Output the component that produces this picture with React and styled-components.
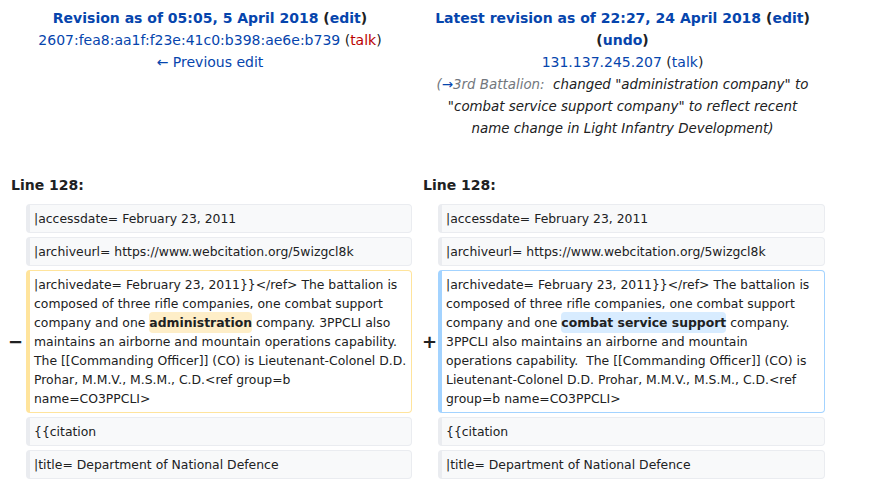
import React from 'react';
import styled, { createGlobalStyle } from 'styled-components';

const Global = createGlobalStyle`
  html, body { margin:0; padding:0; background:#fff; }
  body { font-family:'DejaVu Sans', sans-serif; color:#202122; }
`;

const Page = styled.div` width:874px; padding:7px 0 0 4px; box-sizing:border-box; `;

const Header = styled.div`
  display:grid; grid-template-columns: 408px 409px; column-gap:4px; margin-bottom:34px;
  align-items:start;
`;
const Title = styled.div`
  text-align:center; font-size:14px; line-height:22.2px; padding:0 10px 0 14px;
`;
const Bold = styled.div` font-weight:bold; `;
const A = styled.a` color:${p => p.$red ? '#ba0000' : '#0645ad'}; text-decoration:none; `;
const Paren = styled.span` color:#202122; `;
const Comment = styled.div` font-style:italic; font-size:13.4px; color:#202122; `;
const Auto = styled.span` color:#72777d; `;

const Grid = styled.div`
  display:grid; grid-template-columns: 18px 386px 18px 387px; column-gap:4px; row-gap:4px;
`;
const LineNo = styled.div`
  grid-column: span 2; font-weight:bold; font-size:14px; line-height:22px; padding-left:7px; margin-bottom:4px;
`;
const Marker = styled.div`
  display:flex; align-items:center; justify-content:flex-end;
  font-weight:bold; font-size:18px; line-height:1; color:#202122;
  margin-right:${p => p.$shift || 0}px;
`;
const kinds = {
  ctx: { bg:'#f8f9fa', bd:'#eaecf0' },
  del: { bg:'#fff', bd:'#ffe49c' },
  add: { bg:'#fff', bd:'#a3d3ff' },
};
const Cell = styled.div`
  font-size:12.4px; line-height:19px; white-space:pre-wrap; word-wrap:break-word;
  background:${p => kinds[p.$kind].bg};
  border:1px solid ${p => kinds[p.$kind].bd}; border-left-width:4px; border-radius:4px;
  padding:4px 3px 4px 4px;
`;
const Change = styled.span`
  font-weight:bold; border-radius:4px; padding:3px 0;
  background:${p => p.$kind === 'del' ? '#feeec8' : '#d8ecff'};
`;

const Ctx = ({ text }) => (
  <>
    <Marker />
    <Cell $kind="ctx">{text}</Cell>
  </>
);

export default function App() {
  return (
    <Page>
      <Global />
      <Header>
        <Title>
          <Bold><A>Revision as of 05:05, 5 April 2018</A> <Paren>(<A>edit</A>)</Paren></Bold>
          <div><A>2607:fea8:aa1f:f23e:41c0:b398:ae6e:b739</A> <Paren>(<A $red>talk</A>)</Paren></div>
          <div><A>← Previous edit</A></div>
        </Title>
        <Title>
          <Bold><A>Latest revision as of 22:27, 24 April 2018</A> <Paren>(<A>edit</A>)</Paren></Bold>
          <Bold><Paren>(<A>undo</A>)</Paren></Bold>
          <div><A>131.137.245.207</A> <Paren>(<A>talk</A>)</Paren></div>
          <Comment>
            <Auto>(<A>→</A>3rd Battalion:</Auto>{'\u00a0 '}changed "administration company" to "combat service support company" to reflect recent name change in Light Infantry Development)
          </Comment>
        </Title>
      </Header>
      <Grid>
        <LineNo>Line 128:</LineNo>
        <LineNo>Line 128:</LineNo>

        <Ctx text="|accessdate= February 23, 2011" />
        <Ctx text="|accessdate= February 23, 2011" />

        <Ctx text="|archiveurl= https://www.webcitation.org/5wizgcl8k" />
        <Ctx text="|archiveurl= https://www.webcitation.org/5wizgcl8k" />

        <Marker $shift={-1}>−</Marker>
        <Cell $kind="del">
          {'|archivedate= February 23, 2011}}</ref> The battalion is\ncomposed of three rifle companies, one combat support\ncompany and one '}
          <Change $kind="del">administration</Change>
          {' company. 3PPCLI also\nmaintains an airborne and mountain operations capability.\nThe [[Commanding Officer]] (CO) is Lieutenant-Colonel D.D.\nProhar, M.M.V., M.S.M., C.D.<ref group=b\nname=CO3PPCLI>'}
        </Cell>
        <Marker $shift={-3}>+</Marker>
        <Cell $kind="add">
          {'|archivedate= February 23, 2011}}</ref> The battalion is\ncomposed of three rifle companies, one combat support\ncompany and one '}
          <Change $kind="add">combat service support</Change>
          {' company.\n3PPCLI also maintains an airborne and mountain\noperations capability.  The [[Commanding Officer]] (CO) is\nLieutenant-Colonel D.D. Prohar, M.M.V., M.S.M., C.D.<ref\ngroup=b name=CO3PPCLI>'}
        </Cell>

        <Ctx text="{{citation" />
        <Ctx text="{{citation" />

        <Ctx text="|title= Department of National Defence" />
        <Ctx text="|title= Department of National Defence" />
      </Grid>
    </Page>
  );
}
